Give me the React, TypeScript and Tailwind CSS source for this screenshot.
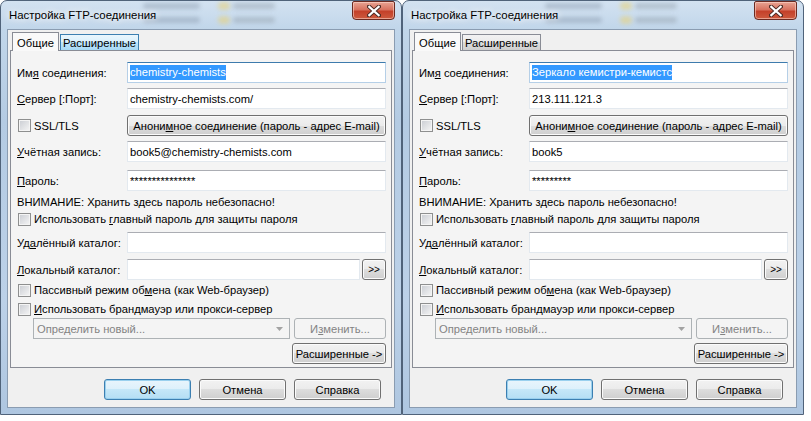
// Two side-by-side Windows 7 "FTP connection settings" dialogs
import React from 'react';

// Shared look of a normal Win7 push button
const btnBase =
  "flex items-center justify-center h-[21px] rounded-[3px] border border-[#707070] bg-[linear-gradient(#f2f2f2_0%,#ebebeb_50%,#dddddd_50%,#cfcfcf_100%)] shadow-[inset_0_0_0_1px_#fbfbfb] text-black whitespace-nowrap";

// Disabled button look
const btnDisabled =
  "flex items-center justify-center h-[21px] rounded-[3px] border border-[#adb2b5] bg-[#f4f4f4] text-[#838383] whitespace-nowrap";

interface DialogData {
  name: string;
  server: string;
  user: string;
  password: string;
  tabHover: boolean;
}

const dialogs: DialogData[] = [
  {
    name: 'chemistry-chemists',
    server: 'chemistry-chemists.com/',
    user: 'book5@chemistry-chemists.com',
    password: '***************',
    tabHover: true,
  },
  {
    name: 'Зеркало кемистри-кемистс',
    server: '213.111.121.3',
    user: 'book5',
    password: '*********',
    tabHover: false,
  },
];

// Text box, optionally focused, optionally with selected text
const Field: React.FC<{ value?: string; focus?: boolean; selected?: boolean; className?: string }> = ({
  value,
  focus,
  selected,
  className = '',
}) => (
  <div
    className={`h-[21px] flex items-center bg-white border px-[2px] overflow-hidden whitespace-nowrap ${
      focus ? 'border-[#b5cfe7] border-t-[#3d7bad]' : 'border-[#e3e9ef] border-t-[#abadb3]'
    } ${className}`}
  >
    {selected ? <span className="bg-[#3399ff] text-white leading-[15px]">{value}</span> : <span>{value}</span>}
  </div>
);

// Unchecked Win7 check box
const Check = () => (
  <span className="block w-[13px] h-[13px] shrink-0 border border-[#8e8f8f] bg-[linear-gradient(135deg,#c9ccd2,#f6f6f6)] shadow-[inset_0_0_0_1px_#f4f4f4]" />
);

// Check box row with a label
const CheckRow: React.FC<{ children: React.ReactNode; className?: string }> = ({ children, className = '' }) => (
  <div className={`flex items-center h-[16px] whitespace-nowrap ${className}`}>
    <span className="ml-[1px]">
      <Check />
    </span>
    <span className="ml-[3px]">{children}</span>
  </div>
);

// The red close button of the caption
const CloseButton = () => (
  <div className="w-[43px] h-[19px] rounded-b-[4px] rounded-t-[2px] border border-[#6b2a21] bg-[linear-gradient(#e8a493_0%,#d8725f_45%,#c4412a_55%,#cd5a3e_100%)] shadow-[inset_0_0_0_1px_rgba(255,220,210,0.55)] flex items-center justify-center">
    <svg width="14" height="12" viewBox="0 0 14 12">
      <path d="M2 1.5 L12 10.5 M12 1.5 L2 10.5" stroke="#4a2a24" strokeWidth="4" strokeLinecap="square" />
      <path d="M2.3 1.8 L11.7 10.2 M11.7 1.8 L2.3 10.2" stroke="#ffffff" strokeWidth="2.2" strokeLinecap="square" />
    </svg>
  </div>
);

// One dialog window
const Dialog: React.FC<{ d: DialogData }> = ({ d }) => {
  return (
    <div className="w-[402px] h-[415px] shrink-0 rounded-t-[7px] border border-[#50637a] bg-[linear-gradient(180deg,#d3e2f1_0px,#c1d6ea_28px,#b4cbe3_120px,#bcd1e8_300px,#aec6e0_415px)] px-[6px] flex flex-col overflow-hidden">
      {/* Caption */}
      <div className="relative h-[28px] flex items-start justify-between">
        {/* blurred desktop seen through the glass */}
        <div className="absolute left-[136px] top-[2px] w-[57px] h-[6px] rounded-full bg-[#7f8fa2] opacity-40 blur-[2px]" />
        <div className="absolute left-[136px] top-[16px] w-[57px] h-[6px] rounded-full bg-[#7f8fa2] opacity-40 blur-[2px]" />
        <div className="absolute left-[211px] top-[1px] w-[12px] h-[8px] rounded-sm bg-[#e6d27e] opacity-60 blur-[2px]" />
        <div className="absolute left-[211px] top-[15px] w-[12px] h-[8px] rounded-sm bg-[#e6d27e] opacity-60 blur-[2px]" />
        <div className="absolute left-[226px] top-[2px] w-[42px] h-[6px] rounded-full bg-[#8a96a0] opacity-40 blur-[2px]" />
        <div className="absolute left-[226px] top-[16px] w-[42px] h-[6px] rounded-full bg-[#8a96a0] opacity-40 blur-[2px]" />
        <span className="relative mt-[7px] ml-[2px] leading-[14px] text-[11.4px] [text-shadow:0_0_6px_#fff,0_0_10px_#fff]">
          Настройка FTP-соединения
        </span>
        <div className="relative">
          <CloseButton />
        </div>
      </div>

      {/* Client area */}
      <div className="flex-1 mb-[6px] bg-[#f0f0f0] border border-[#8a9cb1] flex flex-col pt-[2px]">
        {/* Tabs */}
        <div className="h-[18px] flex items-end pl-[4px] whitespace-nowrap">
          <div className="relative z-10 w-[47px] h-[19px] -mb-[1px] border border-b-0 border-[#898c95] bg-[#f9f9f9] flex items-center justify-center pt-[1px]">
            Общие
          </div>
          <div
            className={`ml-[1px] w-[79px] h-[16px] border border-b-0 flex items-center justify-center ${
              d.tabHover
                ? 'border-[#3c7fb1] bg-[linear-gradient(#eaf6fd,#d9f0fc_50%,#bee6fd_50%,#a7d9f5)]'
                : 'border-[#898c95] bg-[linear-gradient(#f2f2f2,#ebebeb_50%,#dddddd_50%,#cfcfcf)]'
            }`}
          >
            Расширенные
          </div>
        </div>

        {/* Tab page */}
        <div className="mx-[2px] h-[318px] border border-[#898c95] bg-[#f4f4f4] pt-[11px] pl-[6px] pr-[5px] flex flex-col whitespace-nowrap">
          <div className="flex items-center">
            <span className="w-[110px] shrink-0">
              Им<u>я</u> соединения:
            </span>
            <Field className="flex-1" value={d.name} focus selected />
          </div>
          <div className="flex items-center mt-[5px]">
            <span className="w-[110px] shrink-0">
              <u>С</u>ервер [:Порт]:
            </span>
            <Field className="flex-1" value={d.server} />
          </div>
          <div className="flex items-center mt-[6px]">
            <div className="w-[110px] shrink-0 flex items-center">
              <span className="ml-[1px]">
                <Check />
              </span>
              <span className="ml-[3px]">SSL/TLS</span>
            </div>
            <div className={`${btnBase} flex-1`}>
              Анони<u>м</u>ное соединение (пароль - адрес E-mail)
            </div>
          </div>
          <div className="flex items-center mt-[5px]">
            <span className="w-[110px] shrink-0">
              <u>У</u>чётная запись:
            </span>
            <Field className="flex-1" value={d.user} />
          </div>
          <div className="flex items-center mt-[8px]">
            <span className="w-[110px] shrink-0">
              <u>П</u>ароль:
            </span>
            <Field className="flex-1" value={d.password} />
          </div>
          <div className="h-[16px] mt-[3px] flex items-center">ВНИМАНИЕ: Хранить здесь пароль небезопасно!</div>
          <CheckRow className="mt-[1px]">
            Использовать <u>г</u>лавный пароль для защиты пароля
          </CheckRow>
          <div className="flex items-center mt-[5px]">
            <span className="w-[110px] shrink-0">
              Уд<u>а</u>лённый каталог:
            </span>
            <Field className="flex-1" />
          </div>
          <div className="flex items-center mt-[6px]">
            <span className="w-[110px] shrink-0">
              <u>Л</u>окальный каталог:
            </span>
            <Field className="flex-1" />
            <div className={`${btnBase} w-[24px] ml-[2px] text-[10px]`}>&gt;&gt;</div>
          </div>
          <CheckRow className="mt-[2px]">
            Пассивный режим об<u>м</u>ена (как Web-браузер)
          </CheckRow>
          <CheckRow className="mt-[3px]">
            <u>И</u>спользовать брандмауэр или прокси-сервер
          </CheckRow>
          <div className="flex items-center mt-[1px] pl-[16px]">
            <div className="flex-1 h-[21px] border border-[#adb2b5] bg-[#f4f4f4] flex items-center justify-between pl-[3px] pr-[6px] text-[#838383]">
              <span>Определить новый...</span>
              <svg width="7" height="4" viewBox="0 0 7 4">
                <path d="M0 0 H7 L3.5 4 Z" fill="#a3a3a3" />
              </svg>
            </div>
            <div className={`${btnDisabled} w-[92px] ml-[4px]`}>
              И<u>з</u>менить...
            </div>
          </div>
          <div className="flex justify-end mt-[4px]">
            <div className={`${btnBase} w-[94px]`}>Расширенные -&gt;</div>
          </div>
        </div>

        {/* Dialog buttons */}
        <div className="flex justify-end gap-[8px] pr-[13px] mt-[11px]">
          <div className="flex items-center justify-center w-[87px] h-[21px] rounded-[3px] border border-[#3c7fb1] bg-[linear-gradient(#e9f5fc_0%,#dcf0fb_50%,#c5e7f8_50%,#b4def4_100%)] shadow-[inset_0_0_0_1px_#9ad0ee]">
            OK
          </div>
          <div className={`${btnBase} w-[87px]`}>Отмена</div>
          <div className={`${btnBase} w-[87px]`}>Справка</div>
        </div>
      </div>
    </div>
  );
};

export default function App() {
  return (
    <div className="w-[811px] h-[421px] overflow-hidden bg-white flex font-['Liberation_Sans',Arial,sans-serif] text-[11.2px] text-black leading-[14px]">
      {dialogs.map((d, i) => (
        <Dialog key={i} d={d} />
      ))}
    </div>
  );
}
